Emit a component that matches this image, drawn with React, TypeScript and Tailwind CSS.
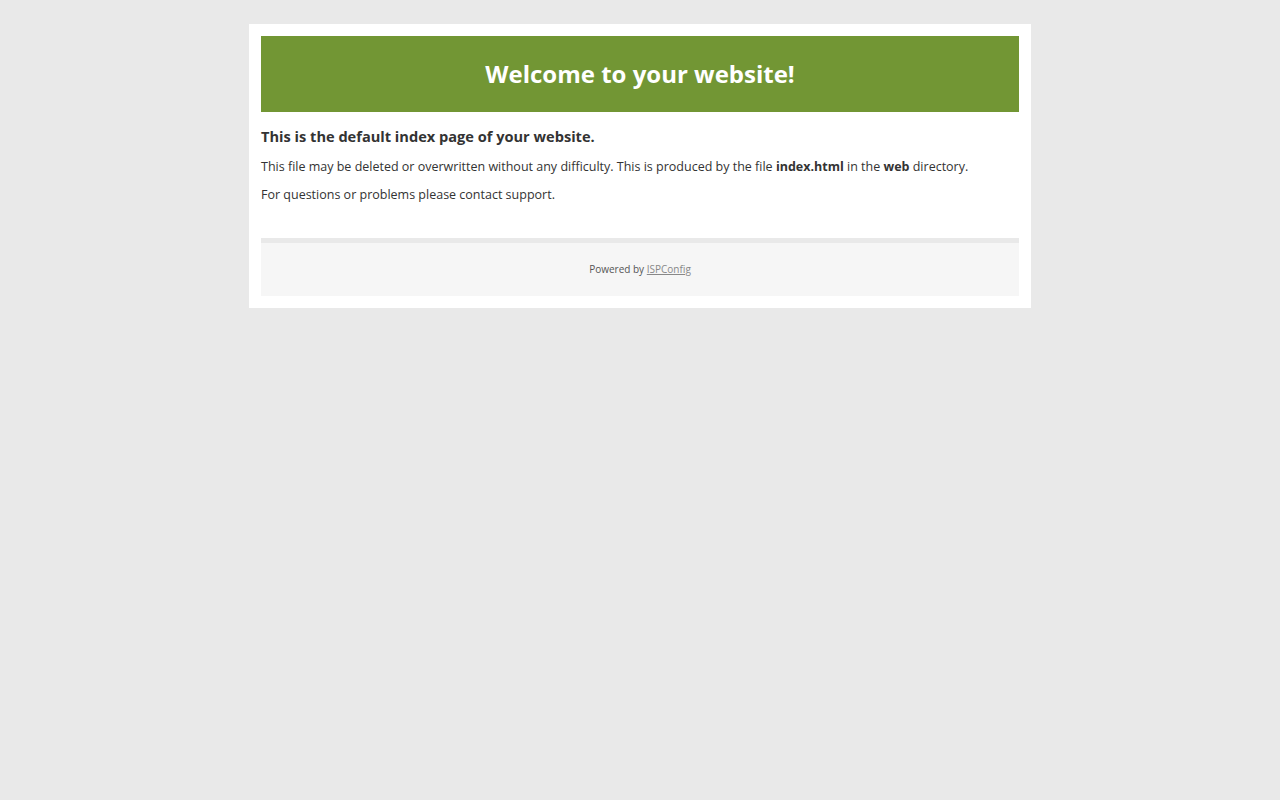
export default function App() {
  return (
    <div className="min-h-screen bg-[#e9e9e9] pt-6 font-['Open_Sans',sans-serif] text-[#333]">
      <div className="mx-auto w-[782px] bg-white p-3">
        {/* Header */}
        <div className="flex h-[76px] items-center justify-center bg-[#729634]">
          <h1 className="text-[24px] font-bold text-white">Welcome to your website!</h1>
        </div>

        {/* Content */}
        <div className="pt-[14px] pb-[35px]">
          <h2 className="text-[14.6px] font-bold leading-5 text-[#333]">
            This is the default index page of your website.
          </h2>
          <p className="mt-[13px] text-[12.5px] leading-4">
            This file may be deleted or overwritten without any difficulty. This is produced by the file{" "}
            <b>index.html</b> in the <b>web</b> directory.
          </p>
          <p className="mt-3 text-[12.5px] leading-4">For questions or problems please contact support.</p>
        </div>

        {/* Footer */}
        <div className="flex h-[58px] items-center justify-center border-t-[5px] border-[#e9e9e9] bg-[#f6f6f6] text-[10px] text-[#555]">
          <span>
            Powered by{" "}
            <a href="#" className="text-[#888] underline">
              ISPConfig
            </a>
          </span>
        </div>
      </div>
    </div>
  );
}
